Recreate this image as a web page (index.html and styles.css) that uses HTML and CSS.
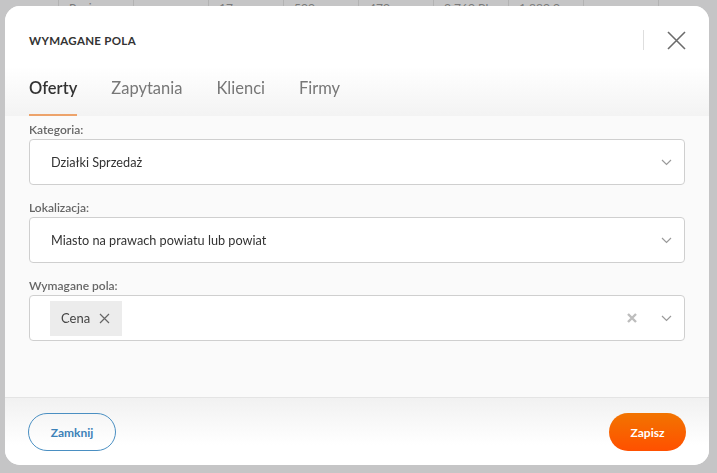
FILE: index.html
```html
<!DOCTYPE html>
<html lang="pl">
<head>
    <meta charset="UTF-8">
    <meta name="viewport" content="width=device-width, initial-scale=1.0">
    <title>Wymagane pola</title>
    <link rel="stylesheet" href="styles.css">
</head>
<body>

    <!-- Tabela w tle -->
    <div class="table-row">
        <div class="cell first"></div>
        <div class="cell">Regiona</div>
        <div class="cell"></div>
        <div class="cell">17</div>
        <div class="cell">500</div>
        <div class="cell">470</div>
        <div class="cell">3 760 PL</div>
        <div class="cell">1 880 0</div>
        <div class="cell"></div>
    </div>

    <!-- Okno modalne -->
    <div class="overlay">
        <div class="modal">
            <div class="modal-top">
                <div class="modal-header">
                    <div class="modal-title">Wymagane pola</div>
                    <div class="close-wrap">
                        <span class="divider"></span>
                        <button class="close-btn" aria-label="Zamknij">
                            <svg width="19" height="19" viewBox="0 0 19 19">
                                <path d="M1 1 L18 18 M18 1 L1 18" stroke="#6b6b6b" stroke-width="1.6" fill="none"/>
                            </svg>
                        </button>
                    </div>
                </div>
                <div class="tabs">
                    <div class="tab active">Oferty</div>
                    <div class="tab">Zapytania</div>
                    <div class="tab">Klienci</div>
                    <div class="tab">Firmy</div>
                </div>
            </div>

            <div class="modal-body">
                <div class="field">
                    <div class="label">Kategoria:</div>
                    <div class="select">
                        <span class="value">Działki Sprzedaż</span>
                        <svg class="chevron" width="11" height="7" viewBox="0 0 11 7">
                            <path d="M1 1 L5.5 5.5 L10 1" stroke="#9a9a9a" stroke-width="1.2" fill="none"/>
                        </svg>
                    </div>
                </div>
                <div class="field">
                    <div class="label">Lokalizacja:</div>
                    <div class="select">
                        <span class="value">Miasto na prawach powiatu lub powiat</span>
                        <svg class="chevron" width="11" height="7" viewBox="0 0 11 7">
                            <path d="M1 1 L5.5 5.5 L10 1" stroke="#9a9a9a" stroke-width="1.2" fill="none"/>
                        </svg>
                    </div>
                </div>
                <div class="field">
                    <div class="label">Wymagane pola:</div>
                    <div class="select multi">
                        <span class="chip">Cena
                            <svg width="11" height="11" viewBox="0 0 11 11">
                                <path d="M1 1 L10 10 M10 1 L1 10" stroke="#666" stroke-width="1.2" fill="none"/>
                            </svg>
                        </span>
                        <span class="spacer"></span>
                        <svg class="clear" width="10" height="10" viewBox="0 0 10 10">
                            <path d="M1 1 L9 9 M9 1 L1 9" stroke="#bdbdbd" stroke-width="2.4" fill="none"/>
                        </svg>
                        <svg class="chevron" width="11" height="7" viewBox="0 0 11 7">
                            <path d="M1 1 L5.5 5.5 L10 1" stroke="#9a9a9a" stroke-width="1.2" fill="none"/>
                        </svg>
                    </div>
                </div>
            </div>

            <div class="modal-footer">
                <button class="btn btn-outline">Zamknij</button>
                <button class="btn btn-primary">Zapisz</button>
            </div>
        </div>
    </div>

</body>
</html>
```

FILE: styles.css
```css
/* Estilos globais */
body {
    margin: 0;
    height: 100vh;
    background-color: #c5c5c6;
    overflow: hidden;
    font-family: Lato, "Liberation Sans", sans-serif;
}

/* Tabela no fundo */
.table-row {
    display: flex;
    height: 40px;
    font-size: 12px;
    line-height: 14px;
    color: #7a7a7a;
}

.cell {
    width: 75px;
    padding: 1px 10px 0;
    box-sizing: border-box;
    border-right: 1px solid #b3b3b3;
}

.cell.first {
    width: 59px;
}

/* Sobreposição */
.overlay {
    position: fixed;
    top: 6px;
    left: 5px;
    width: 704px;
    height: 459px;
}

.modal {
    height: 100%;
    display: flex;
    flex-direction: column;
    background-color: #fafafa;
    border-radius: 15px;
    overflow: hidden;
}

.modal-top {
    background: linear-gradient(#ffffff 55%, #f3f3f3);
    padding: 24px 24px 0;
}

.modal-header {
    display: flex;
    align-items: center;
    justify-content: space-between;
    height: 20px;
}

.modal-title {
    font-size: 11.5px;
    font-weight: 700;
    text-transform: uppercase;
    letter-spacing: 0.3px;
    color: #333;
}

.close-wrap {
    display: flex;
    align-items: center;
    gap: 23px;
    margin-right: -1px;
}

.divider {
    width: 1px;
    height: 20px;
    background-color: #dedede;
}

.close-btn {
    background: none;
    border: none;
    padding: 0;
    width: 19px;
    height: 19px;
    cursor: pointer;
}

.close-btn svg {
    display: block;
}

/* Abas */
.tabs {
    display: flex;
    gap: 34px;
    margin-top: 26px;
}

.tab {
    font-size: 16.5px;
    line-height: 24px;
    padding-bottom: 14px;
    border-bottom: 2px solid transparent;
    color: #777;
}

.tab.active {
    color: #333;
    font-weight: 600;
    border-bottom-color: #eda36b;
}

/* Corpo */
.modal-body {
    flex: 1;
    padding: 5px 24px 0;
}

.field {
    margin-bottom: 14px;
}

.label {
    font-size: 12px;
    line-height: 18px;
    font-weight: 600;
    color: #666;
}

.select {
    height: 46px;
    box-sizing: border-box;
    border: 1px solid #cfcfcf;
    border-radius: 4px;
    background-color: #fff;
    display: flex;
    align-items: center;
    padding: 0 12px 0 21px;
}

.value {
    flex: 1;
    font-size: 12.7px;
    color: #333;
}

.select.multi {
    padding-left: 20px;
}

.chip {
    display: flex;
    align-items: center;
    gap: 9px;
    height: 35px;
    padding: 0 12px 0 11px;
    background-color: #ececec;
    font-size: 13px;
    color: #444;
}

.spacer {
    flex: 1;
}

.clear {
    margin-right: 24px;
}

/* Rodapé */
.modal-footer {
    height: 68px;
    box-sizing: border-box;
    border-top: 1px solid #e4e4e4;
    background: linear-gradient(#f1f1f1, #ffffff 70%);
    display: flex;
    align-items: flex-start;
    justify-content: space-between;
    padding: 15px 23px 0;
}

.btn {
    height: 38px;
    border-radius: 19px;
    font-family: Lato, "Liberation Sans", sans-serif;
    font-size: 12px;
    font-weight: 700;
    cursor: pointer;
}

.btn-outline {
    width: 88px;
    background-color: transparent;
    border: 1px solid #4a8fc2;
    color: #3d82b8;
}

.btn-primary {
    width: 77px;
    border: none;
    background: linear-gradient(#f27400, #ff5000);
    color: #fff;
}
```
